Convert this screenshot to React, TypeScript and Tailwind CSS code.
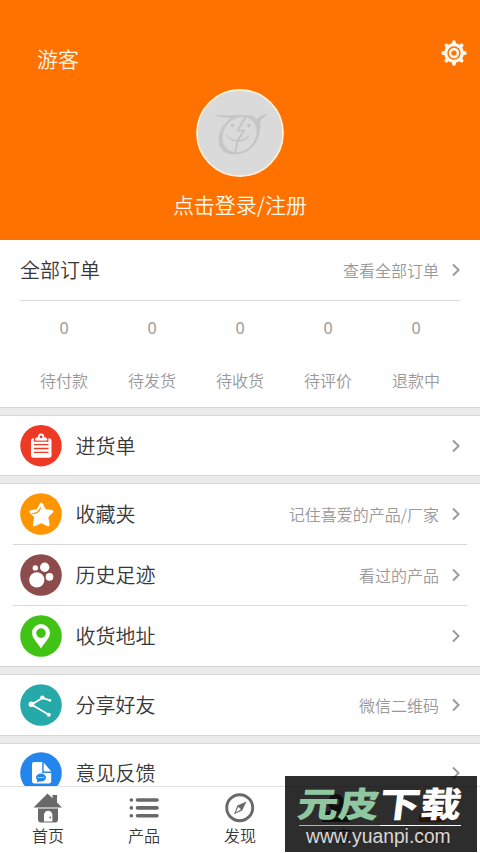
import type { ReactNode } from "react";

const orders = ["待付款", "待发货", "待收货", "待评价", "退款中"];

function Arrow() {
  return (
    <svg className="ml-[13px] h-4 w-2 shrink-0" viewBox="0 0 8 16" fill="none" stroke="#999" strokeWidth="1.9">
      <path d="M1 2.5 6.6 8 1 13.5" />
    </svg>
  );
}

function Band() {
  return <div className="h-[9px] shrink-0 border-y border-[#d6d6d6] bg-[#ebebeb]" />;
}

function Row({ icon, label, note, height }: { icon: ReactNode; label: string; note?: string; height: string }) {
  return (
    <div className={`flex shrink-0 items-center pl-5 pr-5 ${height}`}>
      <svg className="h-[42px] w-[42px] shrink-0" viewBox="0 0 42 42">{icon}</svg>
      <span className="ml-[13.5px] text-[20px] leading-[30px] text-[#383838]">{label}</span>
      <span className="ml-auto pb-px text-[16px] text-[#999]">{note}</span>
      <Arrow />
    </div>
  );
}

function Divider() {
  return <div className="mx-[13px] h-px shrink-0 bg-[#d9d9d9]" />;
}

const listIcon = (
  <>
    <circle cx="21" cy="20.7" r="20.7" fill="#ee3924" />
    <rect x="11" y="13.3" width="20.5" height="19.5" rx="2.5" fill="#fff" />
    <path d="M14.5 13v3.2h13.3V13" fill="none" stroke="#ee3924" strokeWidth="1.2" />
    <path d="M16.3 15.3v-3h1.8a3.1 3.1 0 1 1 6 0h1.8v3z" fill="#fff" />
    <circle cx="21.1" cy="11.9" r="1.3" fill="#ee3924" />
    <path d="M14 19.6h14.5M14 23.5h14.5M14 27.4h14.5" stroke="#ee3924" strokeWidth="1.3" />
  </>
);

const starIcon = (
  <>
    <circle cx="21" cy="21" r="20.8" fill="#ff9500" />
    <path d="m21.3 11 3.4 6.6 7.1.9-5.1 5.3 1.5 8-6.8-3.4-7.1 3.4 1.5-8-4.8-5.1 7-1.1z" fill="#fff" stroke="#fff" strokeWidth="3" strokeLinejoin="round" />
    <path d="M12.3 20.6c4.6-.3 7.3-1.8 8.3-6.2" fill="none" stroke="#ff9500" strokeWidth="1.2" />
  </>
);

const pawIcon = (
  <>
    <circle cx="21" cy="21" r="20.8" fill="#8e4b4c" />
    <g fill="#fff">
      <circle cx="16.8" cy="25.8" r="7.6" />
      <circle cx="15.3" cy="13.9" r="2.7" />
      <circle cx="24.7" cy="13.3" r="4.7" />
      <circle cx="29.5" cy="22.9" r="3.8" />
    </g>
  </>
);

const pinIcon = (
  <>
    <circle cx="21" cy="21" r="20.8" fill="#40c315" />
    <path d="M21 33.5C17.5 28 12 23 12 18.1a9 9 0 0 1 18 0C30 23 24.5 28 21 33.5z" fill="#fff" />
    <circle cx="21" cy="18.1" r="4.8" fill="#40c315" />
  </>
);

const shareIcon = (
  <>
    <circle cx="21" cy="21" r="20.8" fill="#26aaa9" />
    <path d="M30 16.4 22.5 14 11.5 20.5 28.8 30.7" fill="none" stroke="#fff" strokeWidth="1.8" />
    <g fill="#fff">
      <circle cx="11.4" cy="20.3" r="2.8" />
      <circle cx="22.4" cy="13.6" r="2.2" />
      <circle cx="29.9" cy="16.4" r="1.3" />
      <circle cx="28.8" cy="30.7" r="2" />
    </g>
  </>
);

const feedbackIcon = (
  <>
    <circle cx="21" cy="21" r="20.8" fill="#2386ec" />
    <path d="M14 10h8.2v11h9v8a2.5 2.5 0 0 1-2.5 2.5H14.5A2.5 2.5 0 0 1 12 29V12a2 2 0 0 1 2-2z" fill="#fff" />
    <path d="M23.7 10.5v9h7.5z" fill="#fff" />
    <ellipse cx="21" cy="25.5" rx="5" ry="4" fill="#2386ec" />
    <path d="m17.5 27.5-.7 3 3.5-1.6z" fill="#2386ec" />
    <path d="M18.2 25.5h5.6" stroke="#fff" strokeWidth="1.2" strokeDasharray="1.2 1" />
  </>
);

function Gear() {
  return (
    <svg className="h-[26px] w-[26px]" viewBox="-13 -13 26 26">
      <circle r="8.3" fill="none" stroke="#fff8ee" strokeWidth="3.2" />
      <g stroke="#fff8ee" strokeWidth="3.8" strokeLinecap="round">
        <path d="M0-9v-1.8M0 9v1.8M-9 0h-1.8M9 0h1.8" />
        <path d="m-6.4-6.4-1.2-1.2M6.4 6.4l1.2 1.2M-6.4 6.4l-1.2 1.2M6.4-6.4l1.2-1.2" />
      </g>
      <circle r="3.9" fill="none" stroke="#fff8ee" strokeWidth="2.6" />
    </svg>
  );
}

function Avatar() {
  return (
    <svg className="mx-auto h-[88px] w-[88px] shrink-0" viewBox="0 0 88 88" fill="none">
      <circle cx="44" cy="44" r="43.1" fill="#dadada" stroke="#fff3dc" strokeWidth="1.6" />
      {/* hat brim, face outline and ear in one shape, with the face cut out of it */}
      <path d="M18 25.7c11 1.2 23 .2 34 .3 4 .2 7 1.7 9 4.2 3-3.2 6.5-4.6 11.500-5.4-3.500 3-7.500 4.200-8.300 9.700 1.500 17-9.500 31-25.700 31-21 0-20.500-25-3.500-36.500-6 .2-11.500-.7-17-3.300z" fill="#c6c6c6" />
      <ellipse cx="43.5" cy="45.5" rx="18.8" ry="15.8" transform="rotate(-50 43.5 45.5)" fill="#dadada" />
      <circle cx="36.5" cy="36.5" r="1.7" fill="#c3c3c3" />
      <circle cx="53" cy="36.5" r="1.7" fill="#c3c3c3" />
      <path d="M50 27.5 41.5 41.5H48l-5.500 9M47.500 42.500 42 50.500l-3 14" stroke="#c3c3c3" strokeWidth="1.7" />
      <path d="M30.5 46c4.5 7 17 7.500 22.500.5-3 7.500-18 8.500-22.500-.5z" fill="#c3c3c3" stroke="#c3c3c3" strokeWidth=".7" />
    </svg>
  );
}

const tabs = [
  {
    name: "首页",
    icon: (
      <g fill="#696969">
        <path d="M.5 14.5 14.5.5l5 4.7V2H24v7.500l5 5zM5 15.500h20v11a3 3 0 0 1-3 3H8a3 3 0 0 1-3-3z" />
        <path d="M11 28.5V22a4.200 4.200 0 0 1 8.400 0v6.500z" fill="#fff" />
        <circle cx="17.2" cy="24.5" r=".9" />
      </g>
    ),
  },
  {
    name: "产品",
    icon: (
      <g stroke="#696969" strokeWidth="3.6" strokeLinecap="round">
        <path d="M8.5 7h19.500M8.500 14.900h19.500M8.500 22.800h19.500M2.300 7h.1M2.300 14.900h.1M2.300 22.800h.1" />
      </g>
    ),
  },
  {
    name: "发现",
    icon: (
      <>
        <circle cx="14.7" cy="14.7" r="13" fill="none" stroke="#696969" strokeWidth="2.9" />
        <path d="m21.5 8.500-9.200 4-3.300 8.800 8.200-3.800z" fill="#696969" />
        <path d="m13.2 13.800 2.800 2.800-5.200 2.800z" fill="#fff" />
      </>
    ),
  },
  {
    name: "厂家",
    icon: (
      <>
        <path d="M1 29v-8l6-3h16l6 3v8z" fill="#505050" />
        <path d="M15 25C12 19 6.500 14 6.500 9a8.500 8.500 0 0 1 17 0c0 5-5.500 10-8.500 16z" fill="#505050" stroke="#fff" />
        <circle cx="15" cy="9" r="3.5" fill="#fff" />
      </>
    ),
  },
  {
    name: "我的",
    active: true,
    icon: (
      <g fill="#ff7200">
        <ellipse cx="15" cy="9" rx="7" ry="8" />
        <path d="M2 29v-5c0-5 7-7 13-7s13 2 13 7v5z" />
      </g>
    ),
  },
];

export default function App() {
  return (
    <main className="relative flex h-[853px] w-[480px] flex-col overflow-hidden bg-white font-['Noto_Sans_CJK_SC',sans-serif] font-[350]">
      <header className="flex h-60 shrink-0 flex-col bg-[#ff7200] text-[21px] leading-[30px] text-[#fff8e8]">
        <div className="flex h-[89px] shrink-0 items-start justify-between pl-[37px] pr-[13px] pt-10">
          <span className="pt-[3px]">游客</span>
          <Gear />
        </div>
        <Avatar />
        <div className="mt-3 text-center">点击登录/注册</div>
      </header>

      <section className="h-[167px] shrink-0 px-5">
        <div className="flex h-[60px] items-center">
          <span className="text-[20px] text-[#383838]">全部订单</span>
          <span className="ml-auto text-[16px] text-[#999]">查看全部订单</span>
          <Arrow />
        </div>
        <div className="h-px bg-[#d9d9d9]" />
        <div className="grid grid-cols-5 pt-[15px] text-center text-[16px] leading-6 text-[#999]">
          {orders.map((name) => (
            <div key={name}>
              <div className="font-['Noto_Sans',sans-serif] font-normal">0</div>
              <div className="mt-7">{name}</div>
            </div>
          ))}
        </div>
      </section>

      <Band />
      <Row icon={listIcon} label="进货单" height="h-[59px]" />
      <Band />
      <Row icon={starIcon} label="收藏夹" note="记住喜爱的产品/厂家" height="h-[60px]" />
      <Divider />
      <Row icon={pawIcon} label="历史足迹" note="看过的产品" height="h-[60px]" />
      <Divider />
      <Row icon={pinIcon} label="收货地址" height="h-[60px]" />
      <Band />
      <Row icon={shareIcon} label="分享好友" note="微信二维码" height="h-[60px]" />
      <Band />
      <div className="h-[42px] shrink-0 overflow-hidden">
        <Row icon={feedbackIcon} label="意见反馈" height="h-[58px]" />
      </div>

      <nav className="grid h-[67px] shrink-0 grid-cols-5 border-t border-[#e3e3e3] bg-white">
        {tabs.map((tab) => (
          <div key={tab.name} className="flex flex-col items-center pt-[6px]">
            <svg className="h-[30px] w-[30px]" viewBox="0 0 30 30">{tab.icon}</svg>
            <span className={`text-[16px] leading-6 ${tab.active ? "text-[#ff7200]" : "text-[#383838]"}`}>{tab.name}</span>
          </div>
        ))}
      </nav>

      {/* download site badge over the last two tabs */}
      <div className="absolute left-[285px] top-[776px] h-[76px] w-48 bg-[#000000d2]">
        <div className="ml-[13px] h-[49px] w-[164px] pt-1 text-[41px] font-extrabold leading-[44px] text-white">
          <div className="flex origin-center -skew-x-6 scale-y-[0.84]">
            <span className="text-[#8fc7a1]">元皮</span>
            <span>下载</span>
          </div>
        </div>
        <div className="ml-[14px] flex h-px w-[162px]">
          <div className="w-[81px] bg-[#8fc7a1]" />
          <div className="w-[81px] bg-white" />
        </div>
        <div className="ml-[21px] pt-px font-['Liberation_Sans',sans-serif] text-[19.3px] font-normal leading-[19px] text-[#d8d8d8]">www.yuanpi.com</div>
      </div>
    </main>
  );
}
